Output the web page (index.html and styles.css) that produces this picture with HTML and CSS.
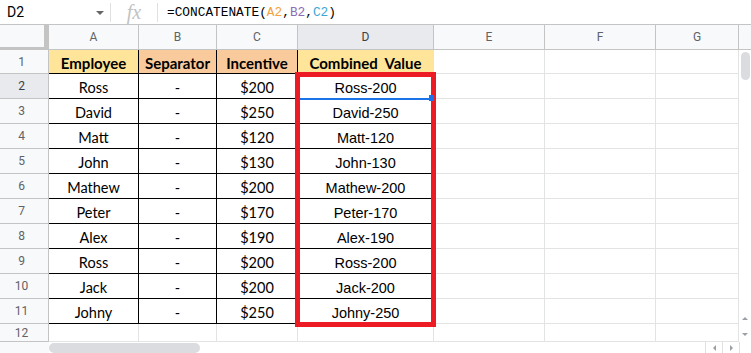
FILE: index.html
```html
<!DOCTYPE html>
<html>
<head>
<meta charset="utf-8">
<link rel="stylesheet" href="styles.css">
</head>
<body>
<div class="app">
  <div class="fbar">
    <div class="namebox"><span class="ref">D2</span><span class="caret"></span></div>
    <span class="sep"></span>
    <div class="fx">fx</div>
    <span class="sep"></span>
    <div class="formula">=CONCATENATE(<span class="r1">A2</span>,<span class="r2">B2</span>,<span class="r3">C2</span>)</div>
  </div>

  <div class="sheet">
    <div class="corner"></div>
    <div class="ch">A</div><div class="ch">B</div><div class="ch">C</div><div class="ch sel">D</div>
    <div class="ch">E</div><div class="ch">F</div><div class="ch">G</div>
    <div class="vs-head"></div>
    <div class="vs">
      <div class="vthumb"></div>
      <div class="varrows"><span class="up"></span><span class="down"></span></div>
    </div>

    <div class="rh">1</div>
    <div class="t h y">Employee</div><div class="t h o">Separator</div><div class="t h o">Incentive</div><div class="t h y dr">Combined&nbsp; Value</div>
    <div class="c"></div><div class="c"></div><div class="c"></div>

    <div class="rh sel">2</div>
    <div class="t">Ross</div><div class="t">-</div><div class="t">$200</div><div class="t d">Ross-200</div>
    <div class="c"></div><div class="c"></div><div class="c"></div>

    <div class="rh">3</div>
    <div class="t">David</div><div class="t">-</div><div class="t">$250</div><div class="t d">David-250</div>
    <div class="c"></div><div class="c"></div><div class="c"></div>

    <div class="rh">4</div>
    <div class="t">Matt</div><div class="t">-</div><div class="t">$120</div><div class="t d">Matt-120</div>
    <div class="c"></div><div class="c"></div><div class="c"></div>

    <div class="rh">5</div>
    <div class="t">John</div><div class="t">-</div><div class="t">$130</div><div class="t d">John-130</div>
    <div class="c"></div><div class="c"></div><div class="c"></div>

    <div class="rh">6</div>
    <div class="t">Mathew</div><div class="t">-</div><div class="t">$200</div><div class="t d">Mathew-200</div>
    <div class="c"></div><div class="c"></div><div class="c"></div>

    <div class="rh">7</div>
    <div class="t">Peter</div><div class="t">-</div><div class="t">$170</div><div class="t d">Peter-170</div>
    <div class="c"></div><div class="c"></div><div class="c"></div>

    <div class="rh">8</div>
    <div class="t">Alex</div><div class="t">-</div><div class="t">$190</div><div class="t d">Alex-190</div>
    <div class="c"></div><div class="c"></div><div class="c"></div>

    <div class="rh">9</div>
    <div class="t">Ross</div><div class="t">-</div><div class="t">$200</div><div class="t d">Ross-200</div>
    <div class="c"></div><div class="c"></div><div class="c"></div>

    <div class="rh">10</div>
    <div class="t">Jack</div><div class="t">-</div><div class="t">$200</div><div class="t d">Jack-200</div>
    <div class="c"></div><div class="c"></div><div class="c"></div>

    <div class="rh">11</div>
    <div class="t">Johny</div><div class="t">-</div><div class="t">$250</div><div class="t d">Johny-250</div>
    <div class="c"></div><div class="c"></div><div class="c"></div>

    <div class="rh">12</div>
    <div class="c"></div><div class="c"></div><div class="c"></div><div class="c"></div>
    <div class="c"></div><div class="c"></div><div class="c"></div>
  </div>

  <div class="hscroll">
    <div class="hcorner"></div>
    <div class="htrack"><div class="hthumb"></div></div>
    <div class="hbtn"><span class="left"></span></div>
    <div class="hbtn"><span class="right"></span></div>
    <div class="hend"></div>
  </div>

  <div class="selection"></div>
  <div class="redbox"></div>
  <div class="handle"></div>
</div>
</body>
</html>
```

FILE: styles.css
```css
html, body {
  margin: 0;
  padding: 0;
  background: #fff;
}

.app {
  position: relative;
  width: 751px;
  height: 353px;
  overflow: hidden;
  background: #fff;
  font-family: Roboto, "Liberation Sans", sans-serif;
}

/* formula bar */
.fbar {
  height: 25px;
  box-sizing: border-box;
  border-bottom: 1px solid #c4c4c4;
  display: flex;
  align-items: center;
}

.namebox {
  width: 110px;
  box-sizing: border-box;
  padding: 0 6px 0 7px;
  display: flex;
  align-items: center;
  justify-content: space-between;
}

.ref {
  font-size: 14px;
  color: #000;
}

.caret {
  width: 0;
  height: 0;
  border-left: 4px solid transparent;
  border-right: 4px solid transparent;
  border-top: 4px solid #666;
  margin-top: 1px;
}

.sep {
  width: 1px;
  height: 19px;
  background: #e0e0e0;
}

.fx {
  width: 46px;
  text-align: center;
  font-family: "Liberation Serif", serif;
  font-style: italic;
  font-size: 20px;
  color: #c2c2c2;
  line-height: 20px;
}

.formula {
  padding-left: 9px;
  font-family: "Liberation Mono", monospace;
  font-size: 12.8px;
  color: #000;
}

.r1 { color: #f4a140; }
.r2 { color: #8e6cb4; }
.r3 { color: #3ea7d4; }

/* sheet grid */
.sheet {
  display: grid;
  grid-template-columns: 49px 90px 78px 81px 136px 111px 111px 83px 12px;
  grid-template-rows: 25px 24px repeat(10, 25px) 18px;
}

.sheet > div {
  box-sizing: border-box;
}

.corner {
  background: #f8f9fa;
  border-right: 5px solid #c4c4c4;
  border-bottom: 3px solid #c4c4c4;
}

.ch {
  background: #f8f9fa;
  border-right: 1px solid #c4c4c4;
  border-bottom: 1px solid #c4c4c4;
  display: flex;
  align-items: center;
  justify-content: center;
  font-size: 12px;
  color: #5f6368;
}

.ch.sel,
.rh.sel {
  background: #e8eaed;
  color: #3c4043;
}

.vs-head {
  background: #f8f9fa;
  border-bottom: 1px solid #c4c4c4;
}

.vs {
  grid-column: 9;
  grid-row: 2 / 14;
  display: flex;
  flex-direction: column;
  align-items: center;
  background: #fff;
}

.vthumb {
  width: 9px;
  height: 28px;
  margin-top: 2px;
  border-radius: 5px;
  background: #dadce0;
}

.varrows {
  margin-top: auto;
  margin-bottom: 6px;
  display: flex;
  flex-direction: column;
  align-items: center;
  gap: 13px;
}

.up {
  width: 0;
  height: 0;
  border-left: 3px solid transparent;
  border-right: 3px solid transparent;
  border-bottom: 3px solid #9aa0a6;
}

.down {
  width: 0;
  height: 0;
  border-left: 3px solid transparent;
  border-right: 3px solid transparent;
  border-top: 3px solid #9aa0a6;
}

.rh {
  grid-column: 1;
  background: #f8f9fa;
  border-right: 1px solid #c4c4c4;
  border-bottom: 1px solid #c4c4c4;
  display: flex;
  align-items: center;
  justify-content: center;
  padding-right: 5px;
  font-size: 12px;
  color: #5f6368;
}

.c {
  border-right: 1px solid #e2e3e3;
  border-bottom: 1px solid #e2e3e3;
}

.t {
  border-right: 1px solid #000;
  border-bottom: 1px solid #000;
  display: flex;
  align-items: flex-end;
  justify-content: center;
  padding-bottom: 2px;
  font-family: Lato, "Liberation Sans", sans-serif;
  font-size: 14.5px;
  color: #000;
  white-space: nowrap;
}

.t.h {
  font-weight: bold;
  font-size: 15px;
  padding-bottom: 1px;
}

.t.y { background: #ffe599; }
.t.o { background: #f9cb9c; }

.t.d {
  font-family: "Liberation Sans", Arial, sans-serif;
  font-size: 14.5px;
  border-right-color: #e2e3e3;
}

.t.dr {
  border-right-color: #e2e3e3;
}

/* horizontal scrollbar */
.hscroll {
  height: 11px;
  display: flex;
}

.hcorner {
  width: 49px;
  background: #f8f9fa;
}

.htrack {
  width: 657px;
  padding-top: 1px;
  box-sizing: border-box;
}

.hthumb {
  width: 151px;
  height: 10px;
  border-radius: 5px;
  background: #dadce0;
}

.hbtn {
  width: 17px;
  box-sizing: border-box;
  border-left: 1px solid #e0e0e0;
  display: flex;
  align-items: center;
  justify-content: center;
}

.left {
  width: 0;
  height: 0;
  border-top: 3px solid transparent;
  border-bottom: 3px solid transparent;
  border-right: 3px solid #9aa0a6;
}

.right {
  width: 0;
  height: 0;
  border-top: 3px solid transparent;
  border-bottom: 3px solid transparent;
  border-left: 3px solid #9aa0a6;
}

.hend {
  width: 12px;
  box-sizing: border-box;
  border-left: 1px solid #e0e0e0;
  background: #fff;
}

/* overlays */
.selection {
  position: absolute;
  left: 297px;
  top: 73px;
  width: 138px;
  height: 27px;
  box-sizing: border-box;
  border: 2px solid #1a73e8;
}

.redbox {
  position: absolute;
  left: 295px;
  top: 72px;
  width: 141px;
  height: 255px;
  box-sizing: border-box;
  border: 5px solid #ed1c24;
}

.handle {
  position: absolute;
  left: 429px;
  top: 95px;
  width: 5px;
  height: 6px;
  background: #1a73e8;
}
```
